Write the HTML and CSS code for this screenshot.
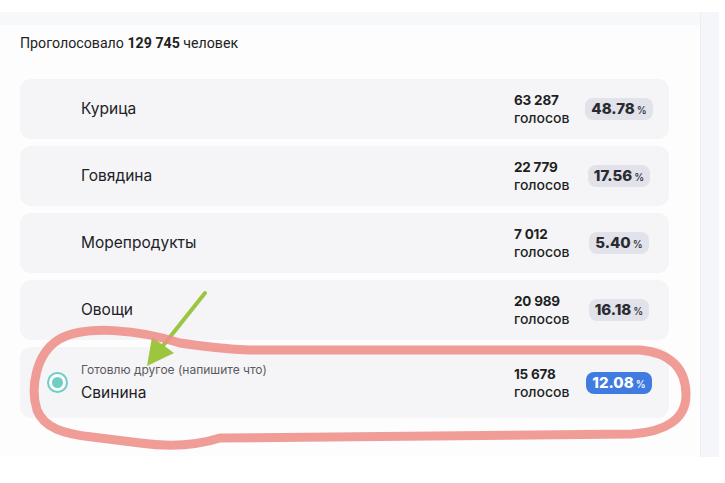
FILE: index.html
```html
<!DOCTYPE html>
<html lang="ru">
<head>
<meta charset="utf-8">
<link rel="stylesheet" href="styles.css">
</head>
<body>
<div class="page">
  <div class="main">
    <div class="topband"></div>
    <div class="content">
      <p class="total">Проголосовало <b>129 745</b> человек</p>
      <ul class="options">
        <li class="option">
          <div class="label"><span class="name">Курица</span></div>
          <div class="votes"><b>63 287</b><span>голосов</span></div>
          <div class="pct"><span class="badge">48.78<small>%</small></span></div>
        </li>
        <li class="option">
          <div class="label"><span class="name">Говядина</span></div>
          <div class="votes"><b>22 779</b><span>голосов</span></div>
          <div class="pct"><span class="badge">17.56<small>%</small></span></div>
        </li>
        <li class="option">
          <div class="label"><span class="name">Морепродукты</span></div>
          <div class="votes"><b>7 012</b><span>голосов</span></div>
          <div class="pct"><span class="badge">5.40<small>%</small></span></div>
        </li>
        <li class="option">
          <div class="label"><span class="name">Овощи</span></div>
          <div class="votes"><b>20 989</b><span>голосов</span></div>
          <div class="pct"><span class="badge">16.18<small>%</small></span></div>
        </li>
        <li class="option option-selected">
          <span class="radio"><span class="radio-dot"></span></span>
          <div class="label">
            <span class="hint">Готовлю другое (напишите что)</span>
            <span class="name">Свинина</span>
          </div>
          <div class="votes"><b>15 678</b><span>голосов</span></div>
          <div class="pct"><span class="badge badge-active">12.08<small>%</small></span></div>
        </li>
      </ul>
    </div>
  </div>
  <div class="side"></div>
</div>
<svg class="annot" width="725" height="483" viewBox="0 0 725 483">
  <g class="arrow">
    <line x1="205" y1="293" x2="158" y2="352"/>
    <polygon points="147,366 152,337 174,353"/>
  </g>
  <path class="loop" d="M 180 343 C 140 330 85 324 58 340 C 36 354 30 388 37 410 C 44 428 64 434 92 437 L 140 443 C 170 447 198 445 220 438 L 632 434 C 664 432 686 420 686 395 C 686 370 672 353 640 350 L 250 350 C 220 349 200 346 180 343 Z"/>
</svg>
</body>
</html>
```

FILE: styles.css
```css
* { box-sizing: border-box; }
html, body { margin: 0; padding: 0; }
body {
  background: #ffffff;
  font-family: Inter, "Noto Sans", sans-serif;
  color: #1f1f22;
  width: 725px;
  height: 483px;
  overflow: hidden;
  position: relative;
}
.page {
  margin-top: 12px;
  display: flex;
  height: 445px;
}
.main {
  width: 700px;
  background: #fdfdfe;
  display: flex;
  flex-direction: column;
}
.topband {
  height: 13px;
  background: #f7f8f9;
}
.side {
  width: 19px;
  background: #f5f6fa;
  border-left: 1px solid #eceef2;
}
.content {
  padding: 10px 31px 0 20px;
}
.total {
  margin: 0 0 28px;
  font-family: Roboto, "Liberation Sans", sans-serif;
  font-size: 14.2px;
  line-height: 16px;
  color: #222;
}
.total b { font-weight: 700; }
.options {
  list-style: none;
  margin: 0;
  padding: 0;
  display: flex;
  flex-direction: column;
  gap: 7px;
}
.option {
  height: 60px;
  background: #f5f5f7;
  border-radius: 11px;
  display: flex;
  align-items: center;
  padding: 0 15px 0 61px;
}
.option-selected {
  height: 71px;
  padding-left: 27px;
}
.label {
  flex: 1;
  display: flex;
  flex-direction: column;
}
.name {
  font-size: 15.5px;
  line-height: 20px;
  font-weight: 400;
  color: #222226;
}
.hint {
  font-size: 12px;
  line-height: 16px;
  color: #5a5a60;
  margin-bottom: 5px;
}
.radio {
  width: 21px;
  height: 21px;
  border-radius: 50%;
  border: 2px solid #6fcdc6;
  display: flex;
  align-items: center;
  justify-content: center;
  margin-right: 13px;
  background: #fff;
}
.radio-dot {
  width: 11px;
  height: 11px;
  border-radius: 50%;
  background: #6fcdc6;
}
.votes {
  width: 70px;
  display: flex;
  flex-direction: column;
  font-size: 13.5px;
  line-height: 17px;
  color: #1f1f22;
}
.votes b { font-weight: 700; letter-spacing: -0.2px; }
.votes span { font-weight: 500; font-size: 14px; }
.pct {
  width: 70px;
  display: flex;
  justify-content: center;
}
.badge {
  display: inline-flex;
  align-items: baseline;
  height: 22px;
  line-height: 22px;
  padding: 0 6px;
  border-radius: 8px;
  background: #e1e2ea;
  font-size: 15px;
  font-weight: 800;
  color: #2a2a30;
}
.badge small {
  font-size: 10px;
  font-weight: 500;
  margin-left: 2px;
}
.badge-active {
  background: #3f7be0;
  color: #fff;
}
.annot {
  position: absolute;
  left: 0;
  top: 0;
  pointer-events: none;
}
.arrow line {
  stroke: #9cc63e;
  stroke-width: 4;
  stroke-linecap: round;
}
.arrow polygon { fill: #9cc63e; }
.loop {
  fill: none;
  stroke: #ef9089;
  stroke-width: 9;
  stroke-linejoin: round;
  opacity: 0.88;
}
```
